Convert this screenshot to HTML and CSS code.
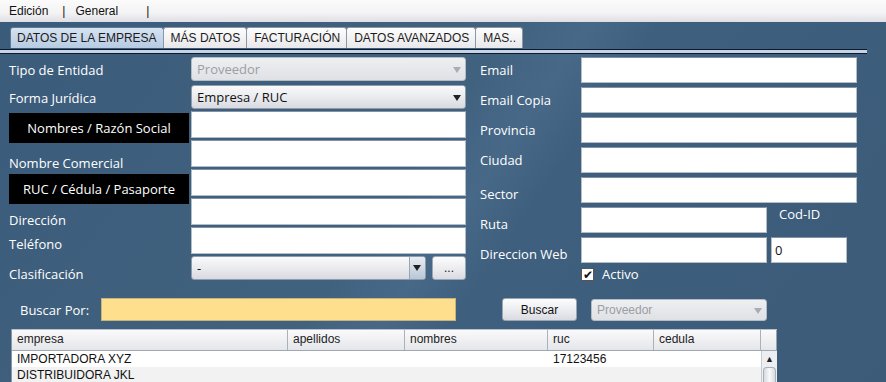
FILE: index.html
```html
<!DOCTYPE html>
<html lang="es">
<head>
  <meta charset="UTF-8" />
  <title>Datos de la Empresa</title>
  <link rel="stylesheet" href="styles.css">
</head>
<body>

<div class="menu-bar">
  <span class="menu-item">Edición</span>
  <span class="menu-sep">|</span>
  <span class="menu-item">General</span>
  <span class="menu-sep last">|</span>
</div>

<div class="window">
  <div class="tabs">
    <div class="tab active">DATOS DE LA EMPRESA</div>
    <div class="tab">MÁS DATOS</div>
    <div class="tab">FACTURACIÓN</div>
    <div class="tab">DATOS AVANZADOS</div>
    <div class="tab">MAS..</div>
  </div>
  <div class="tab-line"></div>

  <div class="form">
    <div class="left">
      <div class="labels">
        <div class="lbl h28">Tipo de Entidad</div>
        <div class="lbl h28">Forma Jurídica</div>
        <div class="lbl-box">Nombres / Razón Social</div>
        <div class="lbl h31 pt12">Nombre Comercial</div>
        <div class="lbl-box">RUC / Cédula / Pasaporte</div>
        <div class="lbl h28 pt7">Dirección</div>
        <div class="lbl h24">Teléfono</div>
        <div class="lbl h28 pt9">Clasificación</div>
      </div>
      <div class="fields">
        <div class="select disabled">Proveedor<span class="arrow"></span></div>
        <div class="select">Empresa / RUC<span class="arrow"></span></div>
        <div class="input"></div>
        <div class="input"></div>
        <div class="input"></div>
        <div class="input"></div>
        <div class="input"></div>
        <div class="combo-row">
          <div class="select combo">-<span class="arrow boxed"></span></div>
          <div class="btn dots">...</div>
        </div>
      </div>
    </div>

    <div class="right">
      <div class="row"><div class="rlbl">Email</div><div class="input wide"></div></div>
      <div class="row"><div class="rlbl">Email Copia</div><div class="input wide"></div></div>
      <div class="row"><div class="rlbl">Provincia</div><div class="input wide"></div></div>
      <div class="row"><div class="rlbl">Ciudad</div><div class="input wide"></div></div>
      <div class="row"><div class="rlbl down">Sector</div><div class="input wide"></div></div>
      <div class="row"><div class="rlbl down">Ruta</div><div class="input short"></div><div class="cod">Cod-ID</div></div>
      <div class="row"><div class="rlbl down">Direccion Web</div><div class="input short"></div><div class="input code">0</div></div>
      <div class="check-row"><span class="check">&#10004;</span>Activo</div>
    </div>
  </div>

  <div class="search">
    <div class="search-lbl">Buscar Por:</div>
    <div class="search-input"></div>
    <div class="btn buscar">Buscar</div>
    <div class="select disabled small">Proveedor<span class="arrow"></span></div>
  </div>

  <div class="table">
    <div class="thead">
      <div class="th c1">empresa</div>
      <div class="th c2">apellidos</div>
      <div class="th c3">nombres</div>
      <div class="th c4">ruc</div>
      <div class="th c5">cedula</div>
      <div class="th corner"></div>
    </div>
    <div class="tbody">
      <div class="rows">
        <div class="tr">
          <div class="td c1">IMPORTADORA XYZ</div>
          <div class="td c2"></div>
          <div class="td c3"></div>
          <div class="td c4">17123456</div>
          <div class="td c5"></div>
        </div>
        <div class="tr alt">
          <div class="td c1">DISTRIBUIDORA JKL</div>
          <div class="td c2"></div>
          <div class="td c3"></div>
          <div class="td c4"></div>
          <div class="td c5"></div>
        </div>
      </div>
      <div class="scrollbar"><span class="up">&#9650;</span><div class="thumb"></div></div>
    </div>
  </div>
</div>

</body>
</html>
```

FILE: styles.css
```css
body {
  margin: 0;
  width: 886px;
  height: 382px;
  overflow: hidden;
  font-family: "Liberation Sans", Arial, sans-serif;
  font-size: 12px;
  background: #3d5e7d;
}

.menu-bar {
  height: 22px;
  display: flex;
  align-items: center;
  padding-left: 9px;
  background: linear-gradient(#fbfbfb, #f3f3f5 60%, #dedee4);
  color: #111;
  font-size: 12px;
}
.menu-sep {
  margin: 0 10px 0 14px;
  color: #111;
}
.menu-sep.last {
  margin-left: 28px;
}

.window {
  height: 360px;
  background: linear-gradient(125deg, #3b5b7a 0%, #41627f 45%, #476887 52%, #3e5f7d 58%, #3b5b79 100%);
  padding-top: 5px;
}

.tabs {
  display: flex;
  padding-left: 10px;
  height: 21px;
}
.tab {
  padding: 0 6px 0 7px;
  display: flex;
  align-items: center;
  color: #1c1c1c;
  background: linear-gradient(#fdfdfd, #e8e8ec);
  border: 1px solid #8c96a4;
  border-bottom: none;
  border-radius: 3px 3px 0 0;
  margin-right: -1px;
}
.tab.active {
  background: linear-gradient(#d6e3f1, #b6cbe2);
  border-color: #5e7a99;
  padding: 0 6px 0 6px;
}

.tab-line {
  width: 867px;
  height: 3px;
  background: #c4d3e6;
  border-top: 1px solid #0c1a2c;
  border-bottom: 1px solid #0c1a2c;
  margin-top: 1px;
}

.form {
  display: flex;
  margin-top: 3px;
  font-family: "Open Sans", sans-serif;
  font-size: 13px;
  color: #fff;
}

.left {
  display: flex;
  padding-left: 9px;
  width: 457px;
}
.labels {
  width: 182px;
  display: flex;
  flex-direction: column;
}
.lbl {
  white-space: nowrap;
}
.h28 { height: 28px; line-height: 26px; }
.h31 { height: 31px; }
.h24 { height: 24px; line-height: 24px; }
.pt12 { padding-top: 11px; height: 20px; line-height: 18px; }
.pt7 { padding-top: 7px; height: 21px; line-height: 18px; }
.pt9 { padding-top: 9px; height: 19px; line-height: 18px; }
.lbl-box {
  width: 180px;
  height: 30px;
  line-height: 31px;
  background: #000;
  text-align: center;
}

.fields {
  width: 275px;
  display: flex;
  flex-direction: column;
  gap: 2px;
}

.select {
  position: relative;
  height: 24px;
  line-height: 23px;
  box-sizing: border-box;
  padding-left: 5px;
  border: 1px solid #8e9cac;
  border-radius: 3px;
  background: linear-gradient(#fafafb, #e7e8ec 60%, #d8dae0);
  color: #111;
  font-family: "Open Sans", sans-serif;
  font-size: 13px;
}
.select + .select {
  margin-top: 2px;
}
.select.disabled {
  color: #9a9ea5;
  background: linear-gradient(#eeeff1, #dfe1e5);
  border-color: #b4bcc6;
}
.arrow {
  position: absolute;
  right: 4px;
  top: 9px;
  width: 0;
  height: 0;
  border-left: 4px solid transparent;
  border-right: 4px solid transparent;
  border-top: 6px solid #222;
}
.disabled .arrow {
  border-top-color: #a8adb4;
}
.arrow.boxed {
  right: 0;
  top: 0;
  width: 15px;
  height: 22px;
  border: none;
  border-left: 1px solid #9aa6b4;
  background: linear-gradient(#e8edf3, #b8c6d6);
  border-radius: 0 2px 2px 0;
}
.arrow.boxed::after {
  content: "";
  position: absolute;
  left: 3px;
  top: 8px;
  border-left: 4px solid transparent;
  border-right: 4px solid transparent;
  border-top: 6px solid #222;
}

.input {
  height: 27px;
  box-sizing: border-box;
  background: #fff;
  border: 1px solid #b5bdc7;
  border-top-color: #8192a6;
}
.fields .input:first-of-type {
  margin-top: 1px;
}

.combo-row {
  display: flex;
  gap: 6px;
}
.combo {
  width: 235px;
}
.btn {
  box-sizing: border-box;
  border: 1px solid #9ba6b3;
  border-radius: 3px;
  background: linear-gradient(#fcfcfd, #e9eaee 60%, #d9dbe1);
  color: #111;
  text-align: center;
  font-family: "Liberation Sans", Arial, sans-serif;
  font-size: 12px;
}
.dots {
  width: 34px;
  height: 24px;
  line-height: 22px;
}

.right {
  display: flex;
  flex-direction: column;
  gap: 4px;
  padding-left: 14px;
}
.row {
  display: flex;
  height: 26px;
}
.rlbl {
  width: 101px;
  line-height: 26px;
}
.rlbl.down {
  line-height: 34px;
}
.input.wide {
  width: 276px;
  height: 26px;
}
.input.short {
  width: 186px;
  height: 26px;
}
.cod {
  margin-left: 12px;
  line-height: 14px;
}
.input.code {
  width: 76px;
  height: 26px;
  margin-left: 4px;
  color: #111;
  line-height: 24px;
  padding-left: 3px;
}
.check-row {
  display: flex;
  align-items: center;
  margin-left: 101px;
  margin-top: -1px;
  height: 16px;
}
.check {
  width: 13px;
  height: 13px;
  box-sizing: border-box;
  background: #fff;
  border: 1px solid #555;
  color: #111;
  font-size: 12px;
  line-height: 11px;
  text-align: center;
  margin-right: 8px;
}

.search {
  display: flex;
  align-items: center;
  margin-top: 14px;
  padding-left: 20px;
  height: 23px;
}
.search-lbl {
  width: 81px;
  color: #fff;
  font-family: "Open Sans", sans-serif;
  font-size: 13px;
}
.search-input {
  width: 355px;
  height: 23px;
  box-sizing: border-box;
  background: #fddf8e;
  border: 1px solid #c9b57c;
}
.buscar {
  width: 75px;
  height: 23px;
  line-height: 23px;
  margin-left: 46px;
  font-size: 12px;
}
.select.small {
  width: 176px;
  height: 22px;
  line-height: 21px;
  margin-left: 14px;
  font-family: "Liberation Sans", Arial, sans-serif;
  font-size: 12px;
}
.select.small .arrow {
  top: 8px;
}

.table {
  margin: 8px 0 0 11px;
  width: 765px;
  background: #fff;
  border-left: 1px solid #8a96a4;
  color: #111;
}
.thead {
  display: flex;
  height: 20px;
  background: linear-gradient(#fafafb, #e5e6ea);
  border-bottom: 1px solid #a0a8b2;
  border-top: 1px solid #b8c0ca;
}
.th {
  box-sizing: border-box;
  line-height: 19px;
  padding-left: 5px;
  border-right: 1px solid #a9b1bb;
  color: #222;
}
.c1 { width: 276px; }
.c2 { width: 117px; }
.c3 { width: 143px; }
.c4 { width: 106px; }
.c5 { width: 107px; }
.corner { width: 16px; padding: 0; border-right: 1px solid #9aa3ad; }
.tbody {
  display: flex;
}
.rows {
  width: 749px;
}
.tr {
  display: flex;
  height: 16px;
  line-height: 16px;
}
.tr.alt {
  background: #f2f2f2;
}
.td {
  box-sizing: border-box;
  padding-left: 5px;
  white-space: nowrap;
}
.scrollbar {
  width: 16px;
  height: 34px;
  background: #eceef1;
  border-left: 1px solid #c6ccd3;
  text-align: center;
  font-size: 9px;
  color: #222;
}
.up {
  display: block;
  height: 14px;
  line-height: 16px;
}
.thumb {
  margin: 2px 1px 0 1px;
  height: 18px;
  border-radius: 4px 4px 0 0;
  background: linear-gradient(90deg, #d7dbe0, #f8f9fa, #d7dbe0);
  border: 1px solid #a8b0ba;
  border-bottom: none;
}
```
